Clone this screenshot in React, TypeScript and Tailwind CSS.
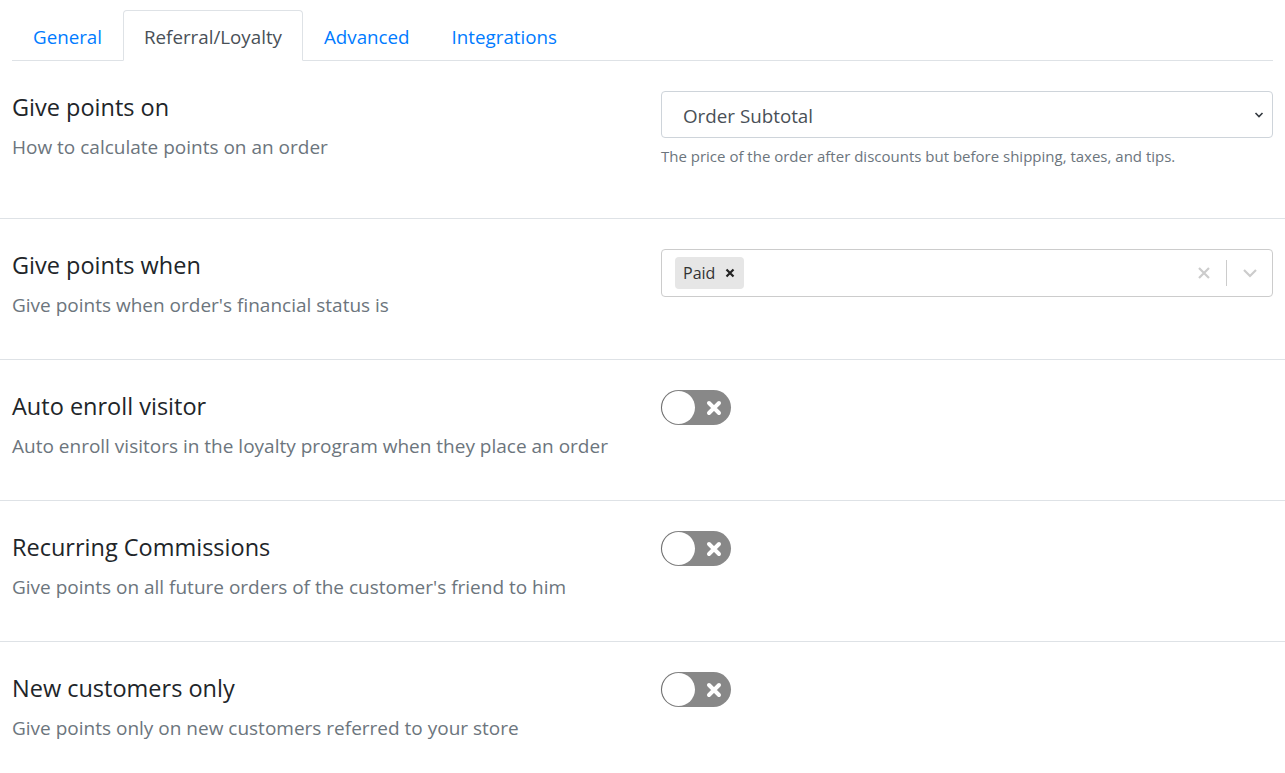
import React, { useState } from "react";

const font = { fontFamily: '"Open Sans", "Noto Sans", Arial, sans-serif' };

const tabs = ["General", "Referral/Loyalty", "Advanced", "Integrations"];

function Toggle({ on, onChange }: { on: boolean; onChange: () => void }) {
  return (
    <button
      onClick={onChange}
      className={`relative w-[70px] h-[35px] rounded-full flex items-center ${on ? "bg-[#28a745]" : "bg-[#888888]"}`}
    >
      <span className={`absolute top-[1px] w-[33px] h-[33px] rounded-full bg-white shadow-[-1px_0_1px_rgba(0,0,0,0.25)] ${on ? "left-[36px]" : "left-[1px]"}`} />
      {!on && (
        <svg className="absolute left-[45px] top-[10px]" width="16" height="16" viewBox="0 0 16 16">
          <path d="M3 3 L13 13 M13 3 L3 13" stroke="#fff" strokeWidth="4" strokeLinecap="round" />
        </svg>
      )}
    </button>
  );
}

function Row({ title, desc, tall, children }: { title: string; desc: string; tall?: boolean; children: React.ReactNode }) {
  return (
    <div className={`${tall ? "h-[158px]" : "h-[141px]"} border-b border-[#dee2e6] px-3 pt-[30px] grid grid-cols-[637px_612px] gap-x-3`}>
      <div className="pt-[3px]">
        <h5 className="text-[23.5px] leading-[27px] text-[#212529] mb-[13px]">{title}</h5>
        <p className="text-[19px] leading-[27px] text-[#6c757d]">{desc}</p>
      </div>
      <div>{children}</div>
    </div>
  );
}

export default function App() {
  const [tab, setTab] = useState("Referral/Loyalty");
  const [autoEnroll, setAutoEnroll] = useState(false);
  const [recurring, setRecurring] = useState(false);
  const [newOnly, setNewOnly] = useState(false);

  return (
    <div className="bg-white min-h-screen w-[1285px] pt-[10px]" style={font}>
      {/* tabs */}
      <div className="px-3">
        <ul className="flex border-b border-[#dee2e6]">
          {tabs.map((t) => (
            <li key={t} className="-mb-px">
              <button
                onClick={() => setTab(t)}
                className={`block px-[20px] pt-[12px] pb-[10px] text-[18.75px] leading-[27px] rounded-t border ${
                  t === tab
                    ? "border-[#dee2e6] border-b-white bg-white text-[#495057]"
                    : "border-transparent text-[#007bff]"
                }`}
              >
                {t}
              </button>
            </li>
          ))}
        </ul>
      </div>

      <Row title="Give points on" desc="How to calculate points on an order" tall>
        <div className="relative h-[47px] border border-[#ced4da] rounded flex items-center pl-[21px] pt-[3px]">
          <span className="text-[18.8px] text-[#495057]">Order Subtotal</span>
          <svg className="absolute right-[8px] top-[19px]" width="10" height="8" viewBox="0 0 10 8">
            <path d="M1.5 2 L5 5.5 L8.5 2" fill="none" stroke="#343a40" strokeWidth="1.6" />
          </svg>
        </div>
        <p className="mt-[7px] text-[15px] leading-[22px] text-[#6c757d]">
          The price of the order after discounts but before shipping, taxes, and tips.
        </p>
      </Row>

      <Row title="Give points when" desc="Give points when order's financial status is">
        <div className="h-[48px] border border-[#cccccc] rounded flex items-center">
          <div className="flex-1 pl-[13px]">
            <span className="inline-flex items-center h-[32px] bg-[#e6e6e6] rounded-sm pl-[8px] pr-[5px]">
              <span className="text-[16px] text-[#333]">Paid</span>
              <svg className="ml-[10px] mr-[4px]" width="10" height="10" viewBox="0 0 10 10">
                <path d="M1.5 1.5 L8.5 8.5 M8.5 1.5 L1.5 8.5" stroke="#222" strokeWidth="2.2" />
              </svg>
            </span>
          </div>
          <div className="w-[45px] flex justify-center">
            <svg width="14" height="14" viewBox="0 0 14 14">
              <path d="M2 2 L12 12 M12 2 L2 12" stroke="#cccccc" strokeWidth="2.2" />
            </svg>
          </div>
          <span className="w-px h-[26px] bg-[#cccccc]" />
          <div className="w-[45px] flex justify-center">
            <svg width="16" height="10" viewBox="0 0 16 10">
              <path d="M2 2 L8 8 L14 2" fill="none" stroke="#cccccc" strokeWidth="2.2" />
            </svg>
          </div>
        </div>
      </Row>

      <Row title="Auto enroll visitor" desc="Auto enroll visitors in the loyalty program when they place an order">
        <Toggle on={autoEnroll} onChange={() => setAutoEnroll(!autoEnroll)} />
      </Row>

      <Row title="Recurring Commissions" desc="Give points on all future orders of the customer's friend to him">
        <Toggle on={recurring} onChange={() => setRecurring(!recurring)} />
      </Row>

      <Row title="New customers only" desc="Give points only on new customers referred to your store">
        <Toggle on={newOnly} onChange={() => setNewOnly(!newOnly)} />
      </Row>
    </div>
  );
}
